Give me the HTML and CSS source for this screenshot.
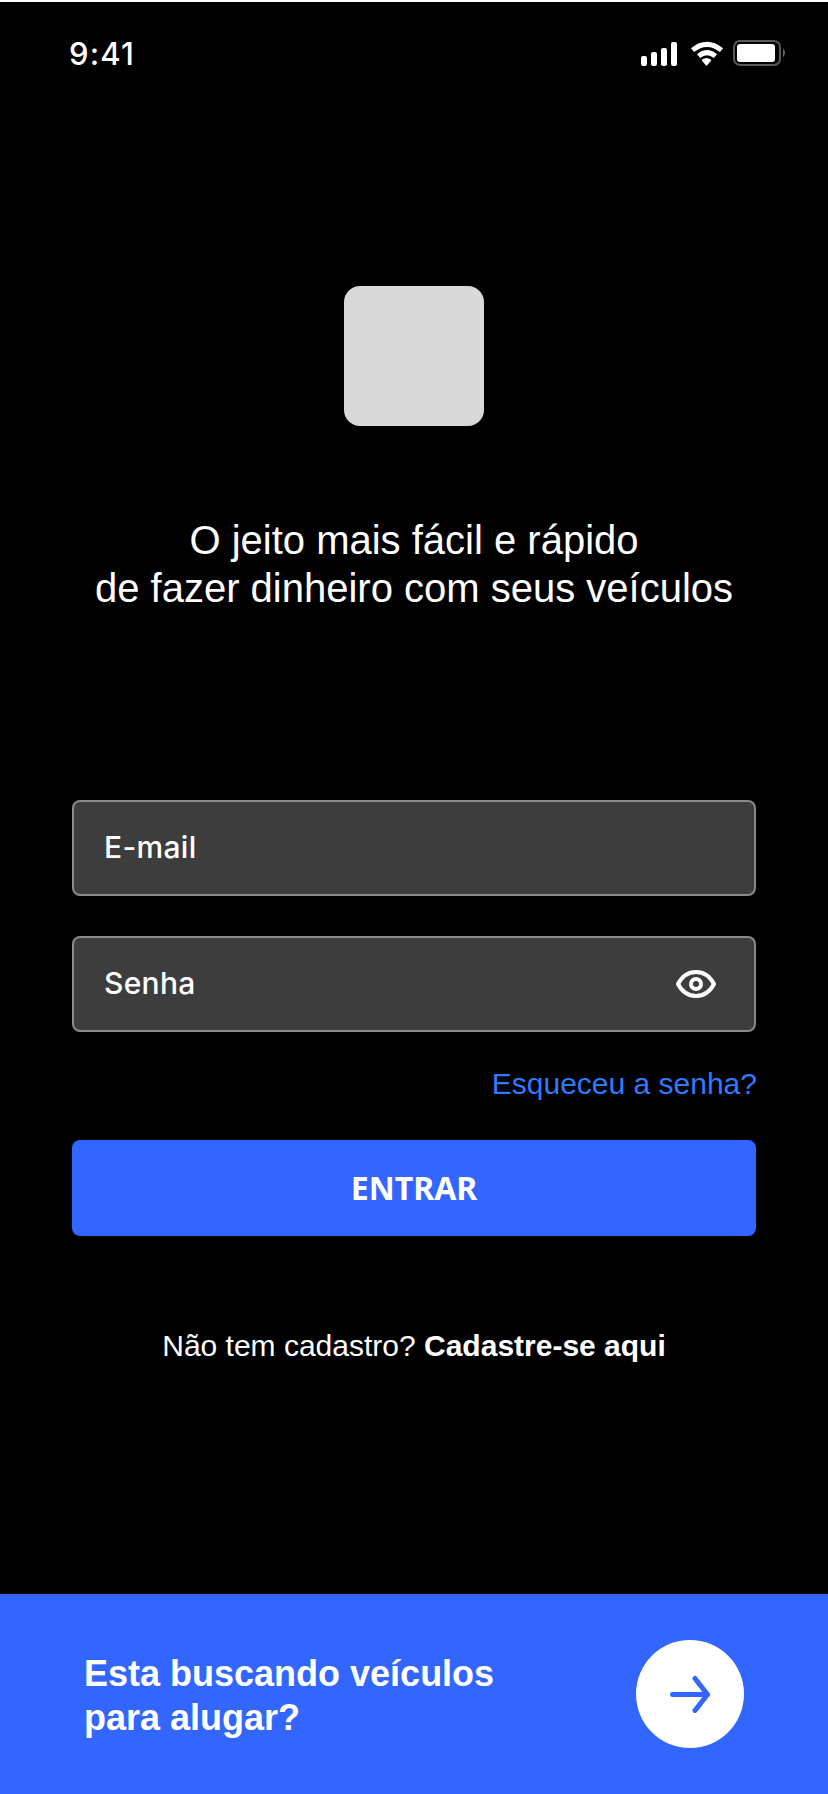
FILE: index.html
```html
<!DOCTYPE html>
<html lang="pt-BR">
<head>
  <meta charset="UTF-8">
  <title>Login</title>
  <link rel="stylesheet" href="styles.css">
</head>
<body>

  <div class="status-bar">
    <span class="time">9:41</span>
    <svg class="status-icons" width="146" height="28" viewBox="0 0 146 28">
      <g fill="#fff">
        <rect x="1" y="16" width="6" height="10" rx="2"/>
        <rect x="11" y="12" width="6" height="14" rx="2"/>
        <rect x="21" y="8" width="6" height="18" rx="2"/>
        <rect x="31" y="2" width="6" height="24" rx="2"/>
        <path d="M62 19.400 Q66.500 16.400 71 19.400 Q71.600 20 71 20.700 L67.200 25.300 Q66.500 26 65.800 25.300 L62 20.700 Q61.400 20 62 19.400Z"/>
      </g>
      <g fill="none" stroke="#fff" stroke-width="5" stroke-linejoin="round">
        <path d="M52.500 10.100 Q67 -1.500 81.500 10.100"/>
        <path d="M58.600 16.100 Q67 9.300 75.400 16.100"/>
      </g>
      <rect x="94" y="1" width="46" height="24" rx="6" fill="none" stroke="#595959" stroke-width="2"/>
      <rect x="97" y="4" width="38" height="18" rx="3" fill="#fff"/>
      <path d="M143 8.500 Q145 10.500 145 13 Q145 15.500 143 17.500Z" fill="#666"/>
    </svg>
  </div>

  <div class="login">
    <div class="logo"></div>
    <h1 class="tagline">O jeito mais fácil e rápido<br>de fazer dinheiro com seus veículos</h1>

    <form class="form">
      <div class="field">
        <input type="text" placeholder="E-mail">
      </div>
      <div class="field">
        <input type="password" placeholder="Senha">
        <svg class="eye" width="40" height="28" viewBox="0 0 40 28" fill="none" stroke="#fff" stroke-width="4">
          <path d="M2 14 C10.500 -2 29.500 -2 38 14 C29.500 30 10.500 30 2 14Z" stroke-linejoin="round"/>
          <circle cx="20" cy="14" r="5"/>
        </svg>
      </div>
      <a class="forgot">Esqueceu a senha?</a>
      <button class="btn-login" type="button">ENTRAR</button>
    </form>

    <p class="signup">Não tem cadastro? <b>Cadastre-se aqui</b></p>
  </div>

  <div class="footer">
    <p class="footer-text">Esta buscando veículos<br>para alugar?</p>
    <button class="btn-go" type="button">
      <svg width="42" height="38" viewBox="0 0 42 38" fill="none" stroke="#3366ff" stroke-width="5" stroke-linecap="round" stroke-linejoin="round">
        <path d="M3.500 19.500 H38.500 M26 3.500 L38.500 19.500 L26 35.500"/>
      </svg>
    </button>
  </div>

</body>
</html>
```
FILE: styles.css
```css
* {
  box-sizing: border-box;
}

body {
  margin: 0;
  height: 1794px;
  display: flex;
  flex-direction: column;
  background-color: #000;
  border-top: 2px solid #fff;
  color: #fff;
  font-family: "Liberation Sans", Arial, sans-serif;
}

p, h1 {
  margin: 0;
}

input, button {
  border: none;
  padding: 0;
}

.status-bar {
  display: flex;
  justify-content: space-between;
  align-items: flex-start;
  height: 284px;
  padding: 34px 42px 0 69px;
}

.time {
  font-family: Inter, sans-serif;
  font-size: 31px;
  font-weight: 500;
  line-height: 36px;
  letter-spacing: 1.2px;
}

.status-icons {
  margin-top: 4px;
}

.login {
  flex: 1;
  display: flex;
  flex-direction: column;
  align-items: center;
  padding: 0 72px;
}

.logo {
  width: 140px;
  height: 140px;
  border-radius: 16px;
  background-color: #d9d9d9;
}

.tagline {
  margin-top: 90px;
  font-size: 40px;
  font-weight: normal;
  line-height: 48px;
  text-align: center;
  white-space: nowrap;
}

.form {
  display: flex;
  flex-direction: column;
  width: 100%;
  margin-top: 188px;
}

.field {
  display: flex;
  align-items: center;
  height: 96px;
  margin-bottom: 40px;
  padding: 0 38px 0 30px;
  border: 2px solid #8a8a8a;
  border-radius: 8px;
  background-color: #3d3d3d;
}

.field input {
  flex: 1;
  height: 90px;
  padding-bottom: 2px;
  background: none;
  color: #fff;
  font-family: Inter, sans-serif;
  font-size: 30px;
  font-weight: 550;
  letter-spacing: 0.3px;
}

.field input::placeholder {
  color: #fff;
  opacity: 1;
}

.forgot {
  align-self: flex-end;
  margin: -6px -1px 0 0;
  color: #2f7bff;
  font-size: 30px;
  line-height: 36px;
}

.btn-login {
  height: 96px;
  margin-top: 38px;
  padding-bottom: 2px;
  border-radius: 8px;
  background-color: #3366ff;
  color: #fff;
  font-family: "Noto Sans", sans-serif;
  font-size: 32px;
  font-weight: bold;
}

.signup {
  margin-top: 92px;
  font-size: 30px;
  line-height: 36px;
  white-space: nowrap;
}

.footer {
  display: flex;
  justify-content: space-between;
  align-items: center;
  height: 200px;
  padding: 0 84px;
  background-color: #3366ff;
}

.footer-text {
  padding-top: 4px;
  font-size: 36px;
  font-weight: bold;
  line-height: 44px;
}

.btn-go {
  display: flex;
  align-items: center;
  justify-content: center;
  width: 108px;
  height: 108px;
  border-radius: 50%;
  background-color: #fff;
}
```
